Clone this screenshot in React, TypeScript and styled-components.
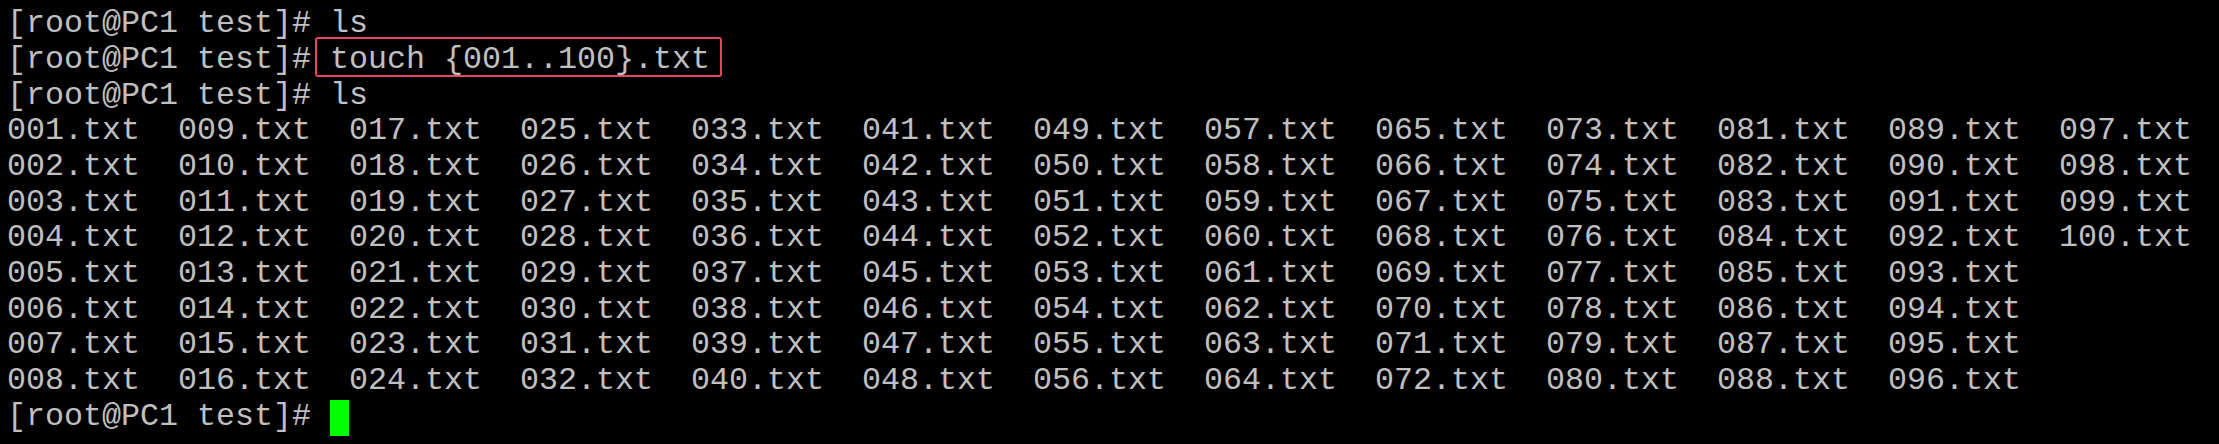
import React from "react";
import styled, { createGlobalStyle } from "styled-components";

const Global = createGlobalStyle`
  html, body { margin: 0; padding: 0; background: #000; }
  body { width: 2219px; height: 444px; overflow: hidden; }
`;

const Terminal = styled.div`
  box-sizing: border-box;
  width: 2219px;
  height: 444px;
  background: #000;
  color: #c0c0c0;
  font-family: "Liberation Mono", "DejaVu Sans Mono", monospace;
  font-size: 31.66px;
  line-height: 35.7px;
  padding: 7.3px 0 0 7px;
  white-space: pre;
`;

const Line = styled.div`
  height: 35.7px;
`;

const Highlight = styled.span`
  position: relative;
  &::after {
    content: "";
    position: absolute;
    left: -15px;
    right: -12px;
    top: -4.6px;
    bottom: 0.5px;
    border: 2px solid #e5485a;
    border-radius: 3px;
    pointer-events: none;
  }
`;

const Listing = styled.div`
  display: grid;
  grid-auto-flow: column;
  grid-template-rows: repeat(8, 35.7px);
  grid-auto-columns: 171px;
`;

const Entry = styled.span``;

const Cursor = styled.span`
  display: inline-block;
  width: 19px;
  height: 35.7px;
  vertical-align: top;
  background: #00ff00;
`;

const PROMPT = "[root@PC1 test]# ";

const files = Array.from({ length: 100 }, (_, i) => `${String(i + 1).padStart(3, "0")}.txt`);

export default function App() {
  return (
    <>
      <Global />
      <Terminal>
        <Line>{PROMPT}ls</Line>
        <Line>
          {PROMPT}
          <Highlight>touch {"{001..100}"}.txt</Highlight>
        </Line>
        <Line>{PROMPT}ls</Line>
        <Listing>
          {files.map((f) => (
            <Entry key={f}>{f}</Entry>
          ))}
        </Listing>
        <Line>
          {PROMPT}
          <Cursor />
        </Line>
      </Terminal>
    </>
  );
}
